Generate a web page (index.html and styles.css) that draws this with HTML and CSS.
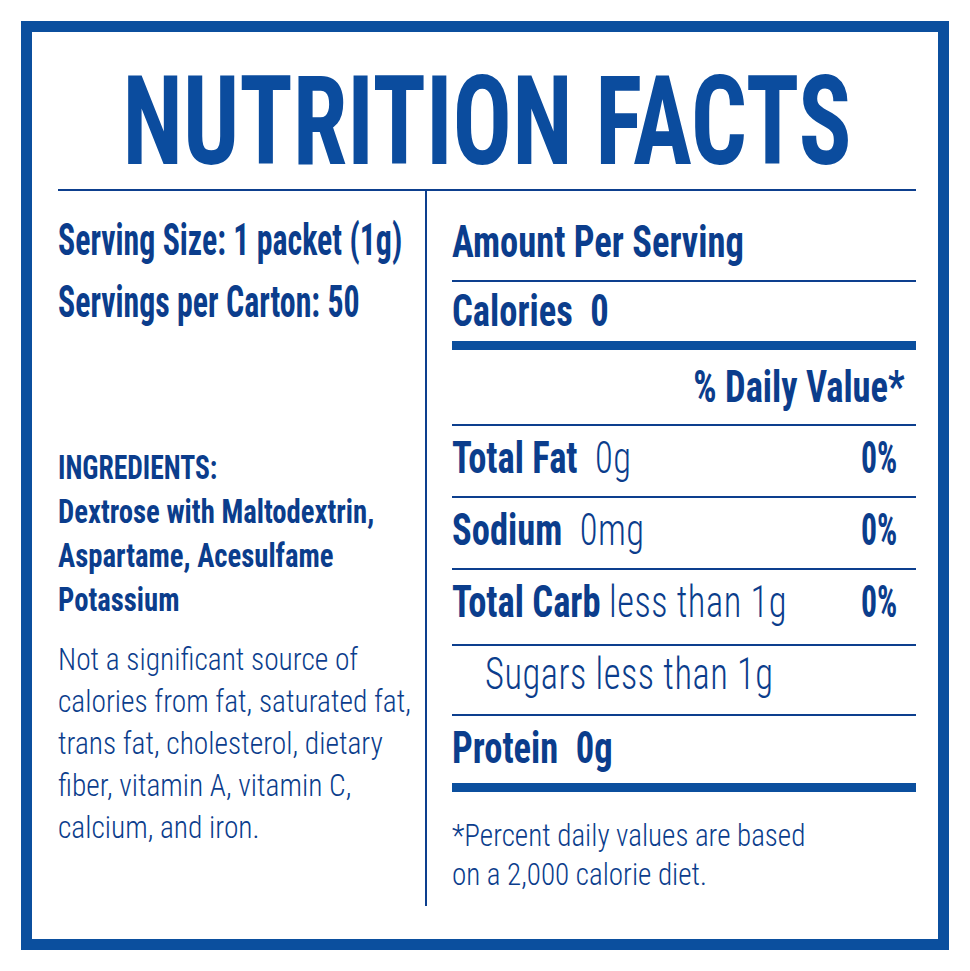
FILE: index.html
```html
<!DOCTYPE html>
<html lang="en">
<head>
<meta charset="utf-8">
<title>Nutrition Facts</title>
<link rel="stylesheet" href="styles.css">
</head>
<body>
<div class="label">
  <div class="title"><span class="t t-title">NUTRITION FACTS</span></div>
  <div class="cols">
    <div class="left">
      <div class="serv">
        <span class="t s-serv">Serving Size: 1 packet (1g)</span>
        <span class="t s-serv">Servings per Carton: 50</span>
      </div>
      <div class="ingr">
        <span class="t s-ingr s-ingr-head">INGREDIENTS:</span>
        <span class="t s-ingr">Dextrose with Maltodextrin,</span>
        <span class="t s-ingr">Aspartame, Acesulfame</span>
        <span class="t s-ingr">Potassium</span>
      </div>
      <div class="note">
        <span class="t s-note">Not a significant source of</span>
        <span class="t s-note">calories from fat, saturated fat,</span>
        <span class="t s-note">trans fat, cholesterol, dietary</span>
        <span class="t s-note">fiber, vitamin A, vitamin C,</span>
        <span class="t s-note">calcium, and iron.</span>
      </div>
    </div>
    <div class="right">
      <div class="r-amt"><span class="t s-bold">Amount Per Serving</span></div>
      <div class="r-cal"><span class="t s-bold">Calories<span class="gap">0</span></span></div>
      <div class="r-dv"><span class="t s-bold tr">% Daily Value*</span></div>
      <div class="row"><span class="t s-bold">Total Fat<span class="lt gap">0g</span></span><span class="t s-bold tr pct">0%</span></div>
      <div class="row"><span class="t s-bold">Sodium<span class="lt gap">0mg</span></span><span class="t s-bold tr pct">0%</span></div>
      <div class="row tall"><span class="t s-bold">Total Carb <span class="lt">less than 1g</span></span><span class="t s-bold tr pct">0%</span></div>
      <div class="row sub"><span class="t s-bold lt indent">Sugars less than 1g</span></div>
      <div class="row last"><span class="t s-bold">Protein<span class="gap">0g</span></span></div>
      <div class="foot">
        <span class="t s-foot">*Percent daily values are based</span>
        <span class="t s-foot">on a 2,000 calorie diet.</span>
      </div>
    </div>
  </div>
</div>
</body>
</html>
```
FILE: styles.css
```css
html, body {
  margin: 0;
  padding: 0;
  background: #ffffff;
}

body {
  font-family: "Roboto", "Liberation Sans", sans-serif;
  font-stretch: 75%;
  color: #0b3d8c;
}

.label {
  box-sizing: border-box;
  width: 928px;
  height: 929px;
  margin: 21px 0 0 21px;
  border: 11px solid #0b4f9e;
  padding: 0 22px 33px 26px;
  display: flex;
  flex-direction: column;
}

/* generic condensed text line */
.t {
  display: block;
  white-space: nowrap;
  transform-origin: left center;
  transform: scaleX(var(--sx, 1));
}

.tr {
  transform-origin: right center;
}

.title {
  box-sizing: border-box;
  height: 159px;
  padding-top: 27px;
  border-bottom: 2px solid #0d3f8e;
  display: flex;
  justify-content: center;
}

.t-title {
  flex: none;
  font-size: 125px;
  line-height: 125px;
  font-weight: 700;
  color: #0b4c9e;
  transform-origin: center center;
  --sx: 0.789;
}

.cols {
  flex: 1;
  display: flex;
  min-height: 0;
}

.left {
  width: 367px;
  flex: none;
  border-right: 2px solid #0d3f8e;
}

.right {
  flex: 1;
  min-width: 0;
  padding-left: 25px;
  display: flex;
  flex-direction: column;
}

.s-serv {
  font-size: 44px;
  font-weight: 700;
  --sx: 0.724;
}

.s-bold {
  font-size: 44px;
  font-weight: 700;
  --sx: 0.83;
}

.lt {
  font-weight: 350;
  letter-spacing: 0.6px;
}

.gap {
  margin-left: 21px;
}

.serv {
  padding-top: 18px;
  line-height: 62px;
}

.ingr {
  margin-top: 113px;
  line-height: 44px;
}

.s-ingr {
  font-size: 33px;
  font-weight: 700;
  --sx: 0.87;
}

.s-ingr-head {
  --sx: 0.835;
}

.note {
  margin-top: 17px;
  line-height: 42px;
}

.s-note {
  font-size: 31px;
  font-weight: 350;
  --sx: 0.95;
}

.r-amt {
  box-sizing: border-box;
  height: 91px;
  padding-top: 13px;
  line-height: 76px;
  border-bottom: 2px solid #0d3f8e;
}

.r-cal {
  box-sizing: border-box;
  height: 68px;
  line-height: 59px;
  border-bottom: 9px solid #0b4f9e;
}

.r-dv {
  box-sizing: border-box;
  height: 76px;
  line-height: 74px;
  padding-right: 11px;
  display: flex;
  justify-content: flex-end;
  border-bottom: 2px solid #0d3f8e;
}

.row {
  box-sizing: border-box;
  height: 72px;
  line-height: 64px;
  padding-bottom: 6px;
  display: flex;
  justify-content: space-between;
  border-bottom: 2px solid #0d3f8e;
}

.row > .t:first-child {
  flex: 1 1 auto;
  min-width: 0;
}

.row.tall {
  height: 76px;
}

.row.sub {
  height: 70px;
  line-height: 56px;
}

.row.last {
  height: 76px;
  border-bottom: 9px solid #0b4f9e;
}

.pct {
  flex: none;
  margin-right: 19px;
  --sx: 0.72;
}

.indent {
  margin-left: 33px;
}

.foot {
  margin-top: 24px;
  line-height: 39px;
}

.s-foot {
  font-size: 31px;
  font-weight: 350;
  --sx: 0.938;
}
```
